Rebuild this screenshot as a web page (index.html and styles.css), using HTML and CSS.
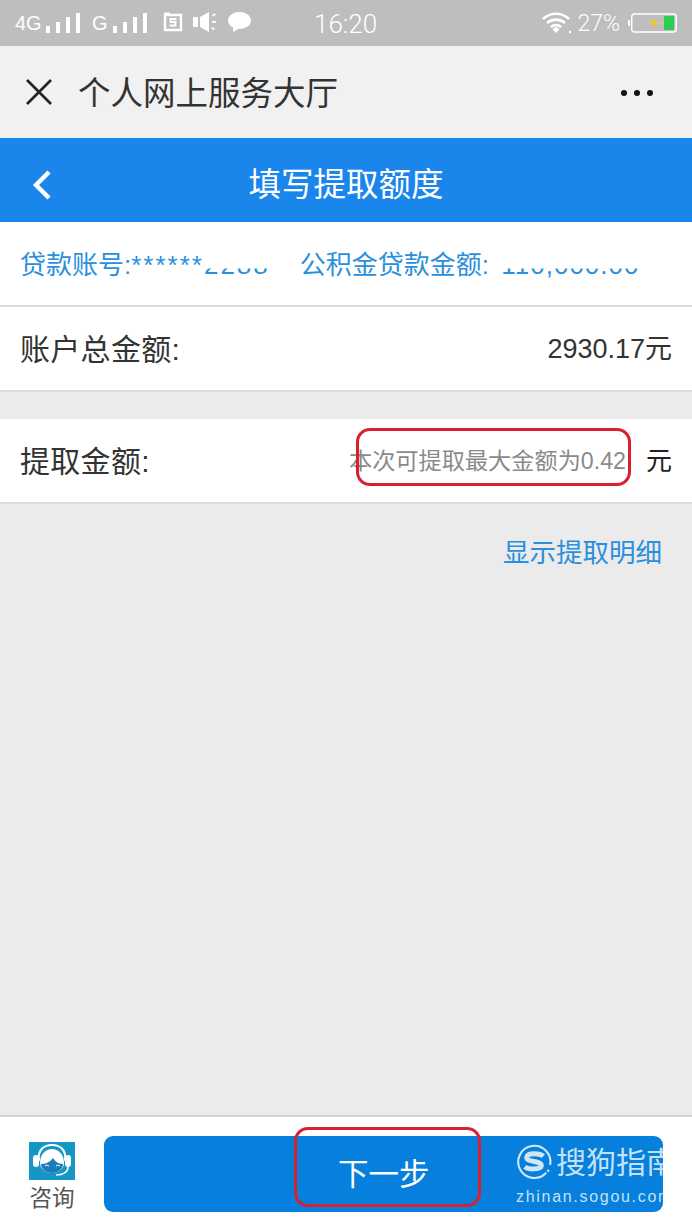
FILE: index.html
```html
<!DOCTYPE html>
<html lang="zh-CN">
<head>
    <meta charset="UTF-8" />
    <meta name="viewport" content="width=device-width, initial-scale=1.0"/>
    <title>填写提取额度</title>
    <link rel="stylesheet" href="styles.css">
</head>
<body>
    <div class="status-bar">
        <div class="status-left">
            <span class="net">4G</span>
            <svg class="signal" width="36" height="22" viewBox="0 0 36 22"><g fill="#fff"><rect x="1" y="14" width="4" height="7"/><rect x="11" y="10" width="4" height="11"/><rect x="21" y="5" width="4" height="16"/><rect x="31" y="1" width="4" height="20"/></g></svg>
            <span class="net net-g">G</span>
            <svg class="signal" width="36" height="22" viewBox="0 0 36 22"><g fill="#fff"><rect x="1" y="14" width="4" height="7"/><rect x="11" y="10" width="4" height="11"/><rect x="21" y="5" width="4" height="16"/><rect x="31" y="1" width="4" height="20"/></g></svg>
            <svg class="st-sim" width="20" height="20" viewBox="0 0 20 20"><path d="M2 3h16v15H2z" fill="none" stroke="#fff" stroke-width="2.400"/><path d="M1 2h6" stroke="#fff" stroke-width="3"/><path d="M13.500 7H7.500v3h5v3.500H6.500" fill="none" stroke="#fff" stroke-width="1.800"/></svg>
            <svg class="st-sound" width="24" height="20" viewBox="0 0 24 20"><g fill="#fff"><rect x="0" y="5" width="5" height="10"/><path d="M7 5l9-5v20l-9-5z"/><rect x="19" y="3" width="3.500" height="1.800" transform="rotate(-30 19 3)"/><rect x="19" y="9" width="4" height="1.800"/><rect x="19" y="15" width="3.500" height="1.800" transform="rotate(30 19 15)"/></g></svg>
            <svg class="st-chat" width="23" height="20" viewBox="0 0 23 20"><ellipse cx="11.500" cy="8.500" rx="11.500" ry="8.500" fill="#fff"/><path d="M5 13l0 7 7-4z" fill="#fff"/></svg>
        </div>
        <span class="clock">16:20</span>
        <div class="status-right">
            <svg width="32" height="22" viewBox="0 0 32 22"><g fill="none" stroke="#fff" stroke-width="2.600"><path d="M1 7c7-7 19-7 26 0"/><path d="M5 11c5-4.500 13-4.500 18 0"/><path d="M9 15c3-2.500 7-2.500 10 0"/></g><path d="M10.500 17.500l3.500-3 3.500 3-3.500 3.500z" fill="#fff"/><circle cx="28" cy="20" r="1.200" fill="#fff"/></svg>
            <span class="battery-pct">27%</span>
            <svg class="battery" width="49" height="20" viewBox="0 0 49 20"><rect x="0" y="7" width="2" height="6" rx="1" fill="#fff"/><rect x="3.700" y="1" width="44.500" height="18" rx="3" fill="none" stroke="#fff" stroke-width="1.500"/><rect x="36" y="3" width="10" height="14" fill="#2ecc4f"/><path d="M18 10h18" stroke="#d9c98a" stroke-width="1.200"/><path d="M24 6l6 4-6 4z" fill="#f5c518"/></svg>
        </div>
    </div>

    <div class="wx-bar">
        <svg class="wx-close" width="28" height="28" viewBox="0 0 28 28"><path d="M2 2l24 24M26 2L2 26" stroke="#222" stroke-width="2.600" fill="none"/></svg>
        <span class="wx-title">个人网上服务大厅</span>
        <div class="wx-more"><i></i><i></i><i></i></div>
    </div>

    <div class="page-head">
        <svg class="back" width="20" height="32" viewBox="0 0 20 32"><path d="M18 3L5 16l13 13" fill="none" stroke="#fff" stroke-width="4.400"/></svg>
        <span>填写提取额度</span>
    </div>

    <div class="row row-info">
        <span>贷款账号:<span class="spaced">******</span><span class="cut spaced">2288</span></span>
        <span class="info-amount">公积金贷款金额: <span class="cut cut-amount">110,000.00</span></span>
    </div>
    <div class="row">
        <span class="label">账户总金额:</span>
        <span class="value">2930.17元</span>
    </div>

    <div class="row row-draw">
        <span class="label">提取金额:</span>
        <div class="draw-input">
            <span class="hint">本次可提取最大金额为0.42</span>
            <span class="unit">元</span>
        </div>
        <div class="mark mark-hint"></div>
    </div>

    <main class="content">
        <a class="detail-link">显示提取明细</a>
    </main>

    <footer class="bottom-bar">
        <div class="consult">
            <svg width="46" height="38" viewBox="0 0 46 38">
                <rect width="46" height="38" fill="#1596c4"/>
                <path d="M10 19C8 7 16 3 23 3s15 4 13 16" fill="none" stroke="#fff" stroke-width="2.200"/>
                <path d="M11 21c0-9 6-14 12-14s12 5 12 14c0 6-6 10-12 10s-12-4-12-10z" fill="#fff"/>
                <path d="M12 22c5 0 9-2 12-6 2 3 5 6 10 6 0 5-5 9-11 9s-11-4-11-9z" fill="#1a7db8"/>
                <rect x="4" y="13" width="6" height="12" rx="3" fill="#fff"/>
                <rect x="36" y="13" width="6" height="12" rx="3" fill="#fff"/>
                <path d="M39 25c0 5-5 8-12 8" fill="none" stroke="#fff" stroke-width="1.500"/>
                <path d="M16 24q2-2 4 0M27 24q2-2 4 0" fill="none" stroke="#fff" stroke-width="1"/>
            </svg>
            <span>咨询</span>
        </div>
        <button class="next-btn">
            <span class="next-label">下一步</span>
            <div class="watermark">
                <div class="wm-top">
                    <svg width="38" height="38" viewBox="0 0 38 38"><path d="M31 30A16.500 16.500 0 1 1 35 22" fill="none" stroke="#cfe6f7" stroke-width="2.200"/><path d="M28 13c-3-3-16-4-17 1-1 6 16 3 15 9-1 4-13 4-17 1" fill="none" stroke="#cfe6f7" stroke-width="5"/><circle cx="33" cy="28" r="1.300" fill="#cfe6f7"/></svg>
                    <span>搜狗指南</span>
                </div>
                <div class="wm-url">zhinan.sogou.com</div>
            </div>
        </button>
        <div class="mark mark-next"></div>
    </footer>
</body>
</html>
```

FILE: styles.css
```css
:root {
    --blue: #1a86ec;
    --btn-blue: #0680dc;
    --link: #2a8fdc;
    --line: #dcdcdc;
    --red: #d8202f;
}

* {
    box-sizing: border-box;
}

body {
    margin: 0;
    width: 692px;
    height: 1230px;
    overflow: hidden;
    display: flex;
    flex-direction: column;
    background-color: #ebebeb;
    font-family: "Liberation Sans", "Noto Sans CJK SC", sans-serif;
    color: #333;
}

.status-bar {
    height: 46px;
    display: flex;
    align-items: center;
    justify-content: space-between;
    position: relative;
    padding: 0 15px;
    background-color: #bebebe;
    color: #fff;
}

.status-left {
    display: flex;
    align-items: center;
}

.net {
    width: 30px;
    font-size: 20px;
}

.net-g {
    width: 20px;
    margin-left: 11px;
}

.signal {
    margin-top: -1px;
}

.st-sim {
    margin: -3px 0 0 15px;
}

.st-sound {
    margin: -2px 0 0 10px;
}

.st-chat {
    margin: -2px 0 0 11px;
}

.clock {
    position: absolute;
    left: 314px;
    top: 9px;
    font-family: Roboto, sans-serif;
    font-weight: 300;
    font-size: 26px;
}

.status-right {
    display: flex;
    align-items: center;
}

.battery-pct {
    margin-left: 3px;
    font-family: Roboto, sans-serif;
    font-size: 23px;
    font-weight: 300;
}

.battery {
    margin-left: 8px;
    margin-top: -1px;
}

.wx-bar {
    height: 92px;
    display: flex;
    align-items: center;
    padding: 0 24px 0 25px;
    background-color: #f1f1f1;
}

.wx-close {
    margin-right: 25px;
    flex-shrink: 0;
}

.wx-title {
    flex-grow: 1;
    font-size: 32.500px;
    color: #333;
    margin-bottom: 3px;
}

.wx-more {
    display: flex;
    gap: 7px;
    margin: 2px 15px 0 0;
}

.wx-more i {
    width: 6px;
    height: 6px;
    border-radius: 50%;
    background-color: #111;
}

.page-head {
    height: 84px;
    display: flex;
    align-items: center;
    justify-content: center;
    position: relative;
    padding-top: 3px;
    background-color: var(--blue);
    color: #fff;
    font-size: 32.500px;
}

.back {
    position: absolute;
    left: 31px;
    top: 31px;
}

.row {
    height: 85px;
    display: flex;
    align-items: center;
    justify-content: space-between;
    position: relative;
    padding: 0 20px 4px;
    background-color: #fff;
    border-bottom: 2px solid var(--line);
    font-size: 30px;
}

.label {
    letter-spacing: 0.300px;
}

.row-info {
    justify-content: flex-start;
    color: var(--link);
    font-size: 26px;
    padding-bottom: 2px;
}

.spaced {
    letter-spacing: 2px;
}

.info-amount {
    margin-left: 30px;
}

.cut {
    clip-path: inset(62% 0 0 0);
}

.cut-amount {
    letter-spacing: 1px;
    margin-left: 5px;
}

.value {
    font-size: 27px;
}

.row-draw {
    margin-top: 27px;
}

.draw-input {
    display: flex;
    align-items: center;
}

.hint {
    font-size: 23.200px;
    color: #8a8a8a;
}

.unit {
    margin-left: 20px;
    font-size: 26px;
    color: #222;
}

.mark {
    position: absolute;
    border: 3px solid var(--red);
    border-radius: 14px;
}

.mark-hint {
    left: 356px;
    top: 9px;
    width: 275px;
    height: 58px;
}

.content {
    flex-grow: 1;
    padding: 27px 30px 0 0;
    text-align: right;
}

.detail-link {
    font-size: 26.500px;
    color: var(--link);
}

.bottom-bar {
    height: 115px;
    display: flex;
    position: relative;
    padding: 19px 29px 0;
    background-color: #fff;
    border-top: 2px solid #d4d4d4;
}

.consult {
    width: 46px;
    display: flex;
    flex-direction: column;
    align-items: center;
    padding-top: 6px;
    font-size: 22.500px;
    color: #555;
    white-space: nowrap;
}

.next-btn {
    width: 559px;
    height: 76px;
    margin-left: 29px;
    position: relative;
    overflow: hidden;
    border: none;
    border-radius: 9px;
    background-color: var(--btn-blue);
    color: #fff;
    font-family: inherit;
    font-size: 30.500px;
}

.next-label {
    position: absolute;
    left: 234px;
    top: 14px;
}

.watermark {
    position: absolute;
    left: 412px;
    top: 5px;
    width: 160px;
    color: #c4e2f7;
    text-align: left;
    white-space: nowrap;
}

.wm-top {
    display: flex;
    align-items: center;
    gap: 3px;
    font-size: 30px;
    height: 42px;
}

.wm-top span {
    margin-top: -4px;
}

.wm-url {
    margin-top: 5px;
    font-size: 16px;
    letter-spacing: 1.700px;
}

.mark-next {
    left: 294px;
    top: 10px;
    width: 187px;
    height: 80px;
}
```
